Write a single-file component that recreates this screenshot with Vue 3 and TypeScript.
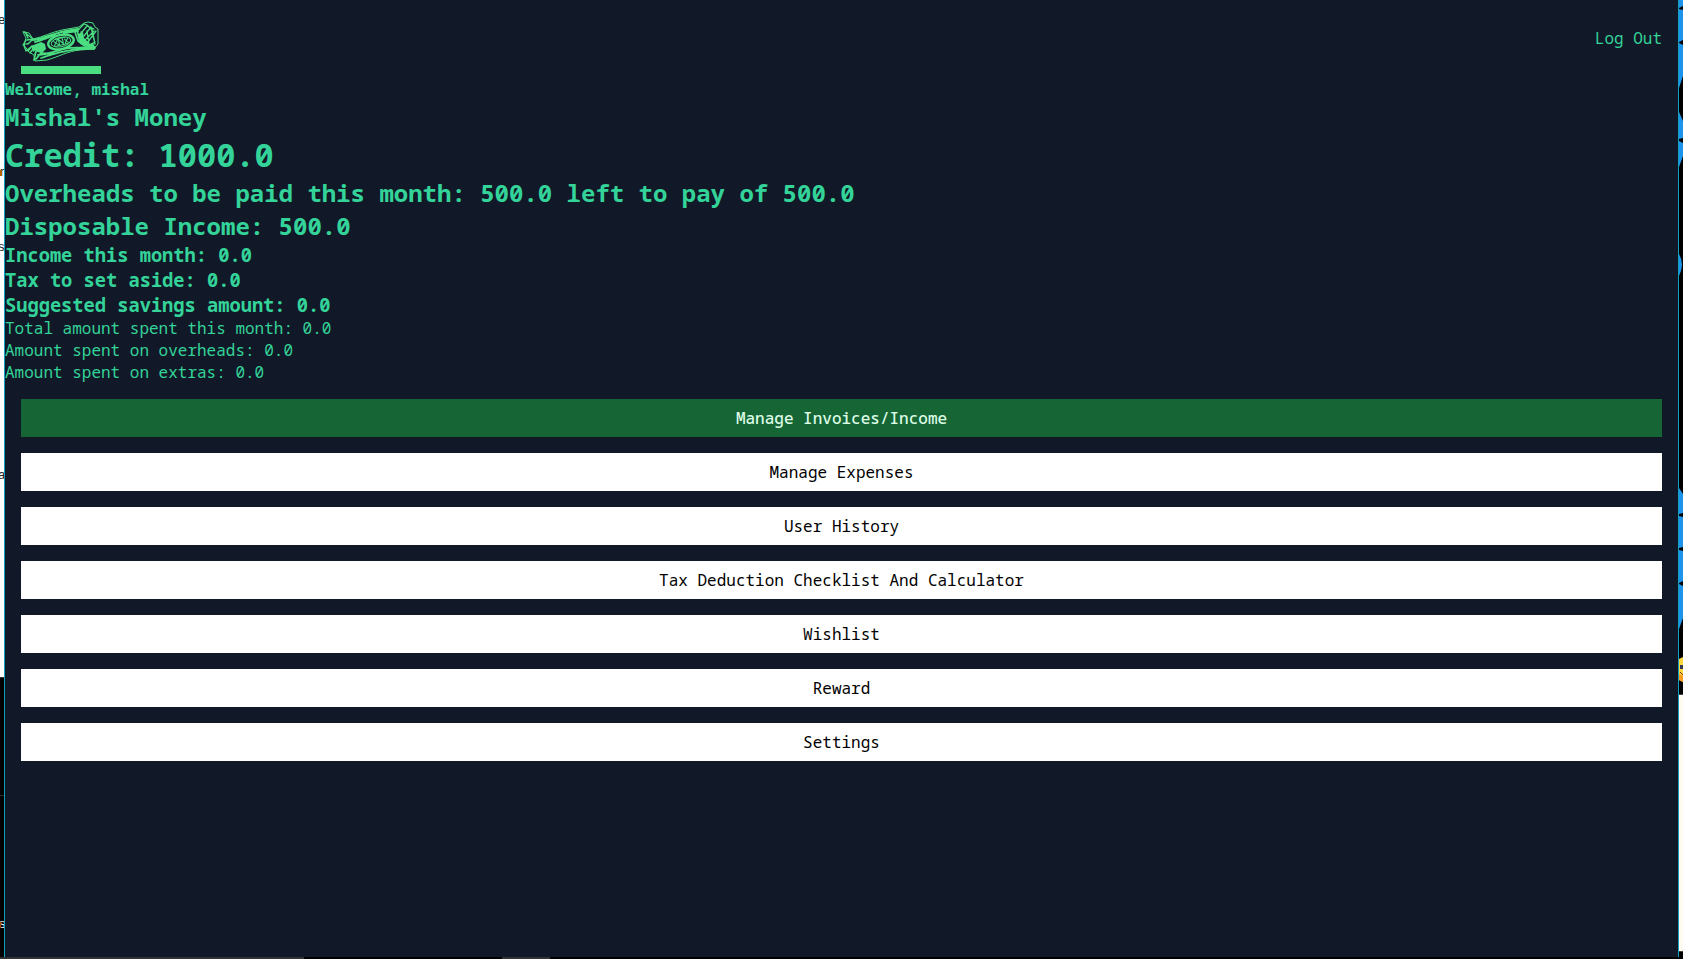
<script setup lang="ts">
import { ref } from 'vue'

const username = 'mishal'
const links = [
  'Manage Invoices/Income',
  'Manage Expenses',
  'User History',
  'Tax Deduction Checklist And Calculator',
  'Wishlist',
  'Reward',
  'Settings',
]
const active = ref(0)
</script>

<template>
  <div class="desktop">
    <div class="row">
      <svg class="edge left" aria-hidden="true">
        <rect width="4" height="677" fill="#fff" />
        <rect y="677" width="4" height="1" fill="#333" />
        <rect y="795" width="4" height="1" fill="#2b2b2b" />
        <g font-family="Liberation Sans, sans-serif" font-size="13" fill="#222">
          <text x="-2" y="24">e</text>
          <text x="0" y="176">r</text>
          <text x="-2" y="251">s</text>
          <text x="-2" y="479">a</text>
          <text x="-1" y="928" fill="#fff">s</text>
        </g>
        <rect y="170" width="2" height="6" fill="#b86200" />
        <rect y="922" width="1" height="6" fill="#a34700" />
      </svg>
      <main class="app">
        <header class="top">
          <a href="#" class="brand" aria-label="Home">
            <svg class="logo" viewBox="0 0 80 42" aria-hidden="true">
              <g fill="none" stroke="#4ade80" stroke-linejoin="round" stroke-linecap="round">
                <path d="M3 12l5 1 4 6c10-2 19-7 29-9l17-3 5-4 4-1 5 1 2 4 3 2 0 15-4 5-14 1c-12 1-22 7-33 10l-12 1-1-6-5-3-5-7 2-7-3-6z" stroke-width="1" />
                <path d="M3 12l9 7-6 1M4 12l3 6M5 20l-3 5 6-2M3 26l2 5 6-5M7 31l4-5M9 33l5-7M12 19l-5 5" stroke-width="1.3" />
                <path d="M12 20c13-2 25-9 46-11M14 22c8-2 14-5 20-7M43 13l14-2" stroke-width="2" stroke-dasharray="3 .5" />
                <path d="M13 40l2-9M15 39l5-6 11 1M17 35c12-1 20-5 30-7l27-1M20 38c13-4 28-10 53-9" stroke-width="1.8" stroke-dasharray="4 .4" />
                <g transform="rotate(-13 40 22)">
                  <ellipse cx="40" cy="22" rx="13" ry="7" stroke-width="2.4" />
                  <ellipse cx="40" cy="22" rx="10" ry="4.6" stroke-width="1" />
                  <path d="M33 20l4 4M37 19l-4 5M38 24v-5l4 5v-5M44 24l3-4M44 20l3 4M34 25h12M35 18h10" stroke-width="1.1" />
                </g>
                <path d="M59 8l4-4 3 1 4 4M61 12l5-6 7 3M63 16l7-9 3 13M64 20l9-9M66 23l9-12M60 12l3 12M66 11l2 13M71 9l3 15M58 17l10 8 6-3" stroke-width="1.3" />
                <path d="M54 12l3 9 7 5M56 10l3 12" stroke-width="1.6" />
              </g>
              <path d="M15 24l5-2 4 2 1 5-4 4-5-1-3-4zM10 26l5-2 1 5-4 3zM57 14l5-2 1 6 5 5-2 4-7-3zM64 26l8-3 3 6z" fill="#4ade80" />
            </svg>
            <span class="bar"></span>
          </a>
          <a href="#" class="logout">Log Out</a>
        </header>
        <section class="summary">
          <h4>Welcome, {{ username }}</h4>
          <h2>Mishal's Money</h2>
          <h1>Credit: 1000.0</h1>
          <h2>Overheads to be paid this month: 500.0 left to pay of 500.0</h2>
          <h2>Disposable Income: 500.0</h2>
          <h3>Income this month: 0.0</h3>
          <h3>Tax to set aside: 0.0</h3>
          <h3>Suggested savings amount: 0.0</h3>
          <p>Total amount spent this month: 0.0</p>
          <p>Amount spent on overheads: 0.0</p>
          <p>Amount spent on extras: 0.0</p>
        </section>
        <nav class="menu">
          <button
            v-for="(label, i) in links"
            :key="label"
            type="button"
            :class="{ active: i === active }"
            @click="active = i"
          >{{ label }}</button>
        </nav>
      </main>
      <svg class="edge right" aria-hidden="true">
        <g fill="#1d94ec">
          <path d="M0 0H4V6L0 8zM0 9L4 10V40L0 42zM0 43L4 45V76L0 88z" />
          <path d="M0 112L4 121V138L0 139zM0 141L4 143V156L0 167z" />
          <path d="M0 254Q6 264 0 276z" />
          <path d="M0 488L4 494V513L0 514zM0 516L4 517V547L0 548zM0 550L4 551V581L0 583zM0 584L4 586V618L0 629z" />
        </g>
        <path d="M0 659L4 657V682L0 680z" fill="#ffd83d" />
        <path d="M0 674L4 676V682L0 680z" fill="#fa9c20" />
        <rect x="1" y="665" width="3" height="4" fill="#333954" />
        <path d="M1 672L4 675" stroke="#70320b" />
        <rect y="694" width="4" height="1" fill="#444" />
        <rect y="695" width="4" height="256" fill="#fffaf0" />
        <rect y="951" width="4" height="1" fill="#444" />
      </svg>
    </div>
    <div class="taskbar"><i class="a"></i><i class="b"></i></div>
  </div>
</template>

<style>
body {
  margin: 0;
  background: #000;
}
</style>

<style scoped>
.desktop {
  display: flex;
  flex-direction: column;
  height: 100vh;
  overflow: hidden;
  background: #000;
}
.row {
  display: flex;
  flex: 1;
  min-height: 0;
}
.edge {
  flex: none;
  display: block;
  width: 4px;
  height: 100%;
  overflow: hidden;
}
.app {
  flex: 1;
  min-width: 0;
  border: solid #149fbd;
  border-width: 0 1px;
  background: #111827;
  color: #34d399;
  font-family: "Noto Sans Mono", "DejaVu Sans Mono", monospace;
  font-size: 16px;
  line-height: 22px;
}
.top {
  display: flex;
  align-items: flex-start;
  justify-content: space-between;
  padding: 20px 16px 4px;
}
.brand {
  display: flex;
  flex-direction: column;
  gap: 4px;
  width: 80px;
}
.logo {
  display: block;
  width: 80px;
  height: 42px;
}
.bar {
  height: 8px;
  background: #4ade80;
}
.logout {
  padding: 7px 0;
  color: inherit;
  text-decoration: none;
}
h1,
h2,
h3,
h4,
p {
  margin: 0;
}
h1 {
  font-size: 32px;
  line-height: 43px;
}
h2 {
  font-size: 24px;
  line-height: 33px;
}
h3 {
  line-height: 25px;
}
.menu {
  display: flex;
  flex-direction: column;
  gap: 16px;
  padding: 16px;
}
button {
  padding: 8px;
  border: 0;
  background: #fff;
  color: #000;
  font: inherit;
  cursor: pointer;
}
button.active {
  background: #166534;
  color: #dcfce7;
  font-weight: 500;
}
.taskbar {
  display: flex;
  height: 2px;
  gap: 198px;
}
.taskbar i {
  background: #333;
}
.a {
  width: 304px;
}
.b {
  width: 48px;
}
</style>
